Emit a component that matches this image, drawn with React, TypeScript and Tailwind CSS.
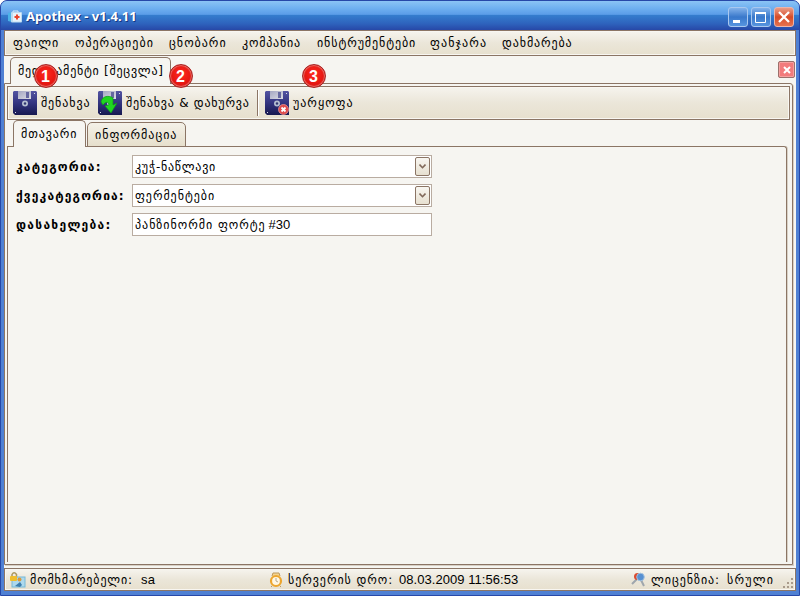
import type { ReactNode } from "react";

const bar = "border border-[#8b7565] bg-gradient-to-b from-[#f6f4ee] via-[#ebe6d9] to-[#e7e0ce] shadow-[inset_0_0_0_1px_#f8f6f1]";

const menu = [
  { label: "ფაილი", box: "w-[62px]" },
  { label: "ოპერაციები", box: "w-[94px]" },
  { label: "ცნობარი", box: "w-[73px]" },
  { label: "კომპანია", box: "w-[75px] tracking-[0.8px]" },
  { label: "ინსტრუმენტები", box: "w-[113px] tracking-[0.9px]" },
  { label: "ფანჯარა", box: "w-[72px] tracking-[1.1px]" },
  { label: "დახმარება", box: "w-[80px] tracking-[0.9px]" },
];

function AppLogo() {
  return (
    <svg width="14" height="14" viewBox="0 0 14 14">
      <path d="M5 2V1h5v1" fill="none" stroke="#d9edfa" />
      <path d="M0 3l4-1v10l-4-1z" fill="#4bb2e8" />
      <rect x="3" y="2" width="11" height="10.500" rx="1" fill="#bcdcf2" />
      <rect x="5" y="3" width="8" height="8.500" fill="#e6f2fa" />
      <path d="M9 4.500v5M6.500 7h5" stroke="#e7452d" strokeWidth="2" />
    </svg>
  );
}

function Floppy({ children }: { children?: ReactNode }) {
  return (
    <svg width="24" height="24" viewBox="0 0 24 24" className="shrink-0">
      <defs>
        <linearGradient id="disk" x1="0" y1="0" x2="0" y2="1">
          <stop offset="0" stopColor="#5354a2" />
          <stop offset="0.5" stopColor="#33347f" />
          <stop offset="1" stopColor="#171950" />
        </linearGradient>
        <linearGradient id="shutter" x1="0" y1="0" x2="1" y2="1">
          <stop offset="0" stopColor="#a4a6c2" />
          <stop offset="1" stopColor="#dcdde4" />
        </linearGradient>
      </defs>
      <path d="M1 0h22l1 1v23H2l-2-2V1z" fill="url(#disk)" />
      <rect x="5" y="0" width="13" height="8" fill="url(#shutter)" />
      <rect x="13" y="1" width="3" height="6" fill="#6668a0" />
      <circle cx="12" cy="12.500" r="3" fill="#b4bdd0" />
      <circle cx="12" cy="12.500" r="1.200" fill="#31366f" />
      <path d="M2 21h1v1H2zM21 2h1v1h-1z" fill="#dadbe9" />
      {children}
    </svg>
  );
}

function Badge({ n, place }: { n: string; place: string }) {
  return (
    <div
      className={`absolute z-20 flex h-6 w-6 items-center justify-center rounded-full border border-[#a72323] bg-[radial-gradient(circle_at_50%_40%,#ff2a20,#e31410_65%,#bd1717)] pt-px font-['Liberation_Sans',sans-serif] text-[16px] leading-none font-bold text-white shadow-[inset_0_0_1px_1px_#e86d65] ${place}`}
    >
      {n}
    </div>
  );
}

function CaptionButton({ close, children }: { close?: boolean; children: ReactNode }) {
  return (
    <div
      className={`flex h-5 w-5 items-center justify-center rounded-[3px] border ${
        close
          ? "border-[#edb5aa] bg-gradient-to-b from-[#e99b86] via-[#d64b27] to-[#e6724e]"
          : "border-[#a9c8ef] bg-gradient-to-b from-[#83b2ea] via-[#3978cb] to-[#5795df]"
      }`}
    >
      <svg width="18" height="18" viewBox="0 0 18 18" fill="none" stroke="#fff">
        {children}
      </svg>
    </div>
  );
}

function Combo({ text, tracking }: { text: string; tracking: string }) {
  return (
    <div className="flex h-[23px] w-[300px] items-center justify-between border border-[#b9aca1] bg-white pr-px pl-[2px]">
      <span className={tracking}>{text}</span>
      <span className="flex h-[19px] w-[15px] items-center justify-center rounded-[2px] border border-[#8b7565] bg-gradient-to-b from-[#f8f6f1] to-[#e7e0d0]">
        <svg width="7" height="5" viewBox="0 0 7 5" fill="none" stroke="#81695a" strokeWidth="1.600">
          <path d="M0.500 0.500l3 3.200 3-3.200" />
        </svg>
      </span>
    </div>
  );
}

export default function App() {
  return (
    <div className="relative flex h-[596px] w-[800px] flex-col overflow-hidden bg-white font-['DejaVu_Sans',sans-serif] text-[12px] leading-none tracking-[1px] whitespace-nowrap text-black">
      <div className="flex h-full flex-col overflow-hidden rounded-t-[7px] border border-[#2748a8] bg-[#4f80d3]">
        <header className="flex h-[29px] shrink-0 items-center bg-[linear-gradient(#8bc4f5_0%,#6fb0f0_25%,#5b9de8_46%,#347ccd_50%,#2e63bd_78%,#2748a7_100%)] pt-[2px] pr-[5px] pl-[7px]">
          <AppLogo />
          <h1 className="ml-1 grow font-['Noto_Sans',sans-serif] text-[13px] font-bold tracking-[0.05px] text-white [text-shadow:1px_1px_0_#173783]">
            Apothex - v1.4.11
          </h1>
          <div className="flex gap-[3px]">
            <CaptionButton>
              <path d="M4 13.500h7" strokeWidth="3" />
            </CaptionButton>
            <CaptionButton>
              <path d="M3.500 4.500h10v10h-10zM3 4.500h11" />
              <path d="M3 5h11" strokeWidth="2" />
            </CaptionButton>
            <CaptionButton close>
              <path d="M4 4l10 10M14 4L4 14" strokeWidth="2.300" />
            </CaptionButton>
          </div>
        </header>

        <main className="mx-[3px] mb-1 flex min-h-0 grow flex-col bg-[#f6f5f1]">
          <nav className={`flex h-[26px] shrink-0 items-center pb-px pl-2 ${bar}`}>
            {menu.map((m) => (
              <span key={m.label} className={m.box}>
                {m.label}
              </span>
            ))}
          </nav>

          <div className="flex h-[27px] shrink-0 items-end justify-between">
            <div className="z-10 -mb-px ml-[6px] flex h-[27px] w-[161px] items-center rounded-t-[5px] border border-b-0 border-[#8b7565] bg-[#f6f5f1] pl-[7px] tracking-[0.75px]">
              მედიკამენტი [შეცვლა]
            </div>
            <div className="mr-px mb-[5px] flex h-[17px] w-[17px] items-center justify-center rounded-[2px] border border-[#9b706b] bg-[#f27b7c] shadow-[inset_0_0_0_1px_#f6a09f]">
              <svg width="8" height="8" viewBox="0 0 8 8" stroke="#fff" strokeWidth="2">
                <path d="M1 1l6 6M7 1L1 7" />
              </svg>
            </div>
          </div>

          <section className="mr-[3px] flex min-h-0 grow flex-col rounded-tr-[3px] border border-[#8b7565] px-[2px] pt-[2px] pb-[2px] shadow-[1px_1px_0_#d8d0c5]">
            <div className={`flex h-[34px] shrink-0 items-center pl-[5px] ${bar}`}>
              <Floppy />
              <span className="ml-1 w-[57px] tracking-[0.9px]">შენახვა</span>
              <Floppy>
                <path d="M3 11c1-6 8-7 12-4v7l4-2-6 10-6-7 4-1c0-3-3-4-6 0z" fill="#20d620" stroke="#0e9a18" strokeWidth="0.700" />
              </Floppy>
              <span className="ml-1 w-[131px] tracking-[0.77px]">შენახვა &amp; დახურვა</span>
              <span className="h-[26px] w-[2px] border-r border-l border-r-white border-l-[#8b7565]" />
              <span className="ml-[6px] flex items-center">
                <Floppy>
                  <circle cx="18.500" cy="18.500" r="5" fill="#df4b4b" stroke="#f5a19c" strokeWidth="0.700" />
                  <path d="M16.500 16.500l4 4M20.500 16.500l-4 4" stroke="#fff" strokeWidth="1.800" />
                </Floppy>
              </span>
              <span className="ml-1">უარყოფა</span>
            </div>

            <div className="z-10 -mb-px flex h-[27px] shrink-0 items-end gap-px pl-[6px]">
              <div className="flex h-[27px] w-[73px] items-center rounded-t-[5px] border border-b-0 border-[#8b7565] bg-[#f6f5f1] pl-[7px] tracking-[0.9px]">
                მთავარი
              </div>
              <div className="flex h-[25px] w-[99px] items-center rounded-t-[5px] border border-[#8b7565] bg-gradient-to-b from-[#f4f1e8] to-[#e6dfcc] pl-[7px] tracking-[0.95px]">
                ინფორმაცია
              </div>
            </div>

            <form className="mr-[3px] flex grow flex-col gap-[6px] rounded-tr-[3px] border border-b-0 border-[#8b7565] pt-2 pl-2 shadow-[1px_0_0_#d8d0c5]">
              <div className="flex items-center">
                <label className="w-[116px] font-bold tracking-[1.2px]">კატეგორია:</label>
                <Combo text="კუჭ-ნაწლავი" tracking="tracking-[0.75px]" />
              </div>
              <div className="flex items-center">
                <label className="w-[116px] font-bold tracking-[1.15px]">ქვეკატეგორია:</label>
                <Combo text="ფერმენტები" tracking="tracking-[0.95px]" />
              </div>
              <div className="flex items-center">
                <label className="w-[116px] font-bold tracking-[1.3px]">დასახელება:</label>
                <div className="flex h-[23px] w-[300px] items-center border border-[#b9aca1] bg-white pl-[2px]">
                  <span className="tracking-[0.97px]">პანზინორმი ფორტე</span>
                  <span className="ml-[3px] font-['Liberation_Sans',sans-serif] text-[13px] tracking-normal">#30</span>
                </div>
              </div>
            </form>
          </section>

          <footer className={`mt-[3px] flex h-[23px] shrink-0 items-center pl-[5px] ${bar}`}>
            <svg width="16" height="16" viewBox="0 0 16 16">
              <rect x="2" y="5" width="13" height="10" fill="#add9ee" stroke="#77b8d5" />
              <path d="M2 5V2.500Q4-1 6.500 2.500V5" fill="none" stroke="#aa965e" strokeWidth="1.500" />
              <rect x="0" y="4" width="7" height="5" rx="1" fill="#efbd2d" />
              <circle cx="9.500" cy="7.500" r="2" fill="#d99a3b" />
              <path d="M5 14l5-4 2 3-2 2z" fill="#3c7eae" />
            </svg>
            <span className="ml-1 w-[111px] tracking-[0.88px]">მომხმარებელი:</span>
            <span className="w-[128px] font-['Liberation_Sans',sans-serif] text-[13px] tracking-[0.3px]">sa</span>
            <svg width="14" height="16" viewBox="0 0 14 16">
              <path d="M3 4l1-3h6l1 3M3 14l-1 1M11 14l1 1" fill="#f3d28e" stroke="#bd995d" strokeWidth="1" />
              <circle cx="7" cy="9" r="5" fill="#fff7e3" stroke="#eda62e" strokeWidth="2.200" />
              <path d="M7 6v3l2 1" fill="none" stroke="#b9a88b" />
            </svg>
            <span className="ml-[5px] w-[111px] tracking-[0.95px]">სერვერის დრო:</span>
            <span className="w-[232px] font-['Liberation_Sans',sans-serif] text-[13px] tracking-[0.05px]">08.03.2009 11:56:53</span>
            <svg width="15" height="16" viewBox="0 0 15 16">
              <path d="M6 7l-5 5M10 8l3 6" stroke="#9fa6ac" strokeWidth="2" />
              <circle cx="6.500" cy="4.500" r="3.500" fill="#dc4b30" />
              <circle cx="9.500" cy="5" r="3.800" fill="#5790d1" stroke="#a3c1de" />
            </svg>
            <span className="ml-[5px] w-[76px] tracking-[0.95px]">ლიცენზია:</span>
            <span className="grow tracking-[1.2px]">სრული</span>
            <svg width="12" height="12" viewBox="0 0 12 12" className="mt-2" fill="#a99b8b">
              <path d="M8 0h2v2H8zM4 4h2v2H4zM8 4h2v2H8zM0 8h2v2H0zM4 8h2v2H4zM8 8h2v2H8z" />
            </svg>
          </footer>
        </main>
      </div>
      <Badge n="1" place="left-[34px] top-[64px]" />
      <Badge n="2" place="left-[169px] top-[64px]" />
      <Badge n="3" place="left-[302px] top-[64px]" />
    </div>
  );
}
